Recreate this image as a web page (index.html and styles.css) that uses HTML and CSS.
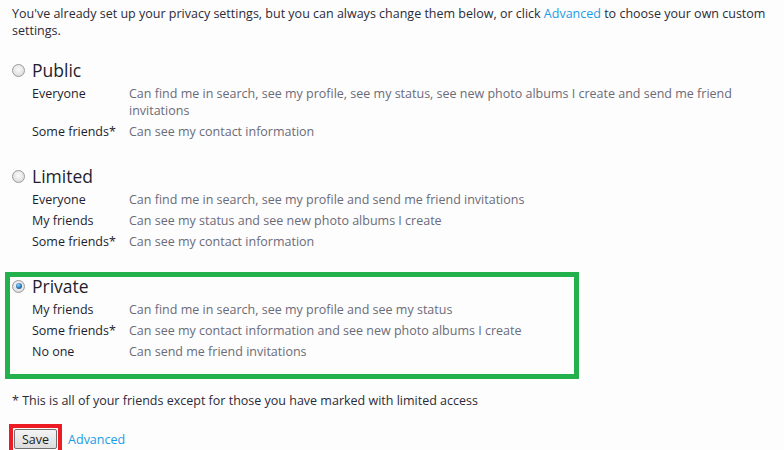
FILE: index.html
```html
<!DOCTYPE html>
<html>
<head>
<meta charset="utf-8">
<link rel="stylesheet" href="styles.css">
</head>
<body>
<div class="page">
  <p class="intro">You've already set up your privacy settings, but you can always change them below, or click <a class="link" href="#">Advanced</a> to choose your own custom<br>settings.</p>

  <div class="option">
    <div class="option-head"><span class="radio"></span><span class="option-title">Public</span></div>
    <div class="rows">
      <div class="row"><span class="who">Everyone</span><span class="what">Can find me in search, see my profile, see my status, see new photo albums I create and send me friend invitations</span></div>
      <div class="row"><span class="who">Some friends*</span><span class="what">Can see my contact information</span></div>
    </div>
  </div>

  <div class="option">
    <div class="option-head"><span class="radio"></span><span class="option-title">Limited</span></div>
    <div class="rows">
      <div class="row"><span class="who">Everyone</span><span class="what">Can find me in search, see my profile and send me friend invitations</span></div>
      <div class="row"><span class="who">My friends</span><span class="what">Can see my status and see new photo albums I create</span></div>
      <div class="row"><span class="who">Some friends*</span><span class="what">Can see my contact information</span></div>
    </div>
  </div>

  <div class="option option-selected">
    <div class="option-head"><span class="radio radio-on"></span><span class="option-title">Private</span></div>
    <div class="rows">
      <div class="row"><span class="who">My friends</span><span class="what">Can find me in search, see my profile and see my status</span></div>
      <div class="row"><span class="who">Some friends*</span><span class="what">Can see my contact information and see new photo albums I create</span></div>
      <div class="row"><span class="who">No one</span><span class="what">Can send me friend invitations</span></div>
    </div>
  </div>

  <p class="note">* This is all of your friends except for those you have marked with limited access</p>

  <div class="actions">
    <span class="save-frame"><button class="save">Save</button></span>
    <a class="link" href="#">Advanced</a>
  </div>
</div>
</body>
</html>
```

FILE: styles.css
```css
html, body {
  margin: 0;
  padding: 0;
  background: #fdfdfd;
}
body {
  font-family: "Open Sans", "Noto Sans", "DejaVu Sans", sans-serif;
  font-size: 12.5px;
  color: #2b2b38;
}
.page {
  padding: 5px 0 0 0;
}
.intro {
  margin: 0 0 0 12px;
  width: 765px;
  line-height: 17px;
}
.link {
  color: #1a9be8;
  text-decoration: none;
}
.option {
  margin-top: 20px;
  padding-left: 12px;
  width: 760px;
}
.option + .option {
  margin-top: 25px;
}
.option-selected {
  margin-left: 5px;
  padding-left: 2px;
  width: 562px;
  border: 5px solid #22b14c;
  padding-bottom: 14px;
}
.option + .option-selected {
  margin-top: 22px;
}
.option-selected .option-head {
  margin-top: -2px;
}
.option-head {
  display: flex;
  align-items: center;
  height: 22px;
}
.radio {
  width: 11px;
  height: 11px;
  border-radius: 50%;
  border: 1px solid #9a9a9a;
  background: radial-gradient(circle at 50% 40%, #fafafa 0, #e4e4e4 60%, #cfcfcf 100%);
  margin-right: 7px;
  position: relative;
  flex: none;
}
.radio-on::after {
  content: "";
  position: absolute;
  left: 2.5px;
  top: 2.5px;
  width: 6px;
  height: 6px;
  border-radius: 50%;
  background: radial-gradient(circle at 40% 35%, #9fd4f5 0, #2a7fc0 50%, #0c3f74 100%);
}
.option-title {
  font-size: 17.5px;
  color: #1e1e30;
}
.rows {
  display: flex;
  flex-direction: column;
  gap: 4px;
  margin-top: 4px;
  padding-left: 20px;
}
.row {
  display: grid;
  grid-template-columns: 97px 1fr;
  line-height: 17px;
}
.who {
  color: #1e1e2e;
}
.what {
  color: #6b6b78;
}
.note {
  margin: 13px 0 0 12px;
  line-height: 17px;
}
.actions {
  margin-top: 15px;
  display: flex;
  align-items: center;
  gap: 6px;
  padding-left: 9px;
}
.save-frame {
  display: inline-block;
  border: 4px solid #ed1c24;
  padding: 1px;
}
.save {
  font-family: inherit;
  font-size: 12.5px;
  color: #1a1a1a;
  padding: 0 7px;
  height: 20px;
  border: 1px solid #707070;
  border-radius: 2px;
  background: linear-gradient(#f4f4f4, #dcdcdc);
}
```
